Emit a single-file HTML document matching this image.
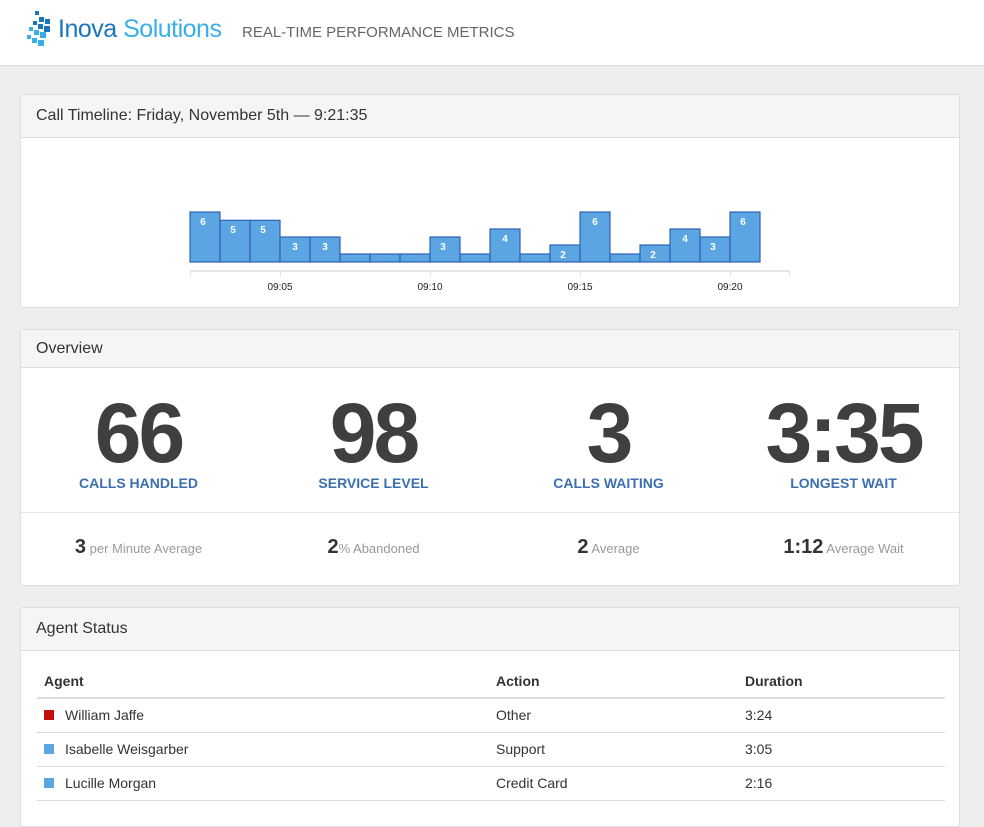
<!DOCTYPE html>
<html><head><meta charset="utf-8"><style>
*{box-sizing:border-box;margin:0;padding:0}
body{width:984px;height:806px;overflow:hidden;background:#eeeeee;font-family:"Liberation Sans",Arial,sans-serif;color:#333;position:relative}
.top{position:absolute;left:0;top:0;width:984px;height:66px;background:#fff;border-bottom:1px solid #ddd}
.brand{position:absolute;left:58px;top:15px;font-size:25px;letter-spacing:-0.5px;color:#1b75bc}
.brand span{color:#3aaee6}
.sub{position:absolute;left:242px;top:24px;font-size:15px;color:#666}
.panel{position:absolute;left:20px;width:940px;background:#fff;border:1px solid #ddd;border-radius:3px}
.ph{height:43px;background:#f5f5f5;border-bottom:1px solid #ddd;padding:12px 15px;font-size:16px;color:#333}
.big{position:absolute;width:235px;text-align:center;font-weight:bold;font-size:84px;color:#3f3f3f;letter-spacing:-3px;top:20px;line-height:90px}
.lab{position:absolute;width:235px;text-align:center;font-weight:bold;font-size:14px;color:#3c6fb1;top:107px}
.sm{position:absolute;width:235px;text-align:center;top:168px;font-size:13px;color:#999}
.sm b{font-size:20px;color:#333}
table{position:absolute;left:16px;top:65px;width:908px;border-collapse:collapse;font-size:14px}
th{text-align:left;font-weight:bold;height:25px;vertical-align:top;padding:0 7px;border-bottom:2px solid #ddd}
td{height:34px;padding:0 7px;border-bottom:1px solid #ddd}
.sq{display:inline-block;width:10px;height:10px;margin-right:11px;vertical-align:-0px}
</style></head><body>
<div class="top">
<svg style="position:absolute;left:27px;top:11px" width="24" height="36" viewBox="0 0 24 36">
<g fill="#1b75bc"><rect x="8" y="0" width="4" height="4"/><rect x="12" y="6" width="5" height="5"/><rect x="18" y="8" width="5" height="5"/><rect x="6" y="10" width="4" height="4"/><rect x="11" y="13" width="5" height="5"/><rect x="17" y="15" width="6" height="6"/></g>
<g fill="#3aaee6"><rect x="2" y="16" width="4" height="4"/><rect x="7" y="19" width="5" height="5"/><rect x="13" y="21" width="6" height="6"/><rect x="0" y="24" width="4" height="4"/><rect x="5" y="27" width="5" height="5"/><rect x="11" y="29" width="6" height="6"/></g>
</svg>
<div class="brand">Inova <span>Solutions</span></div>
<div class="sub">REAL-TIME PERFORMANCE METRICS</div>
</div>

<div class="panel" style="top:94px;height:214px">
<div class="ph">Call Timeline: Friday, November 5th — 9:21:35</div>
<svg style="position:absolute;left:-21px;top:-95px" width="984" height="310">
<g fill="#5ba5e2" stroke="#2f62b5" stroke-width="1.2">
<rect x="190" y="212" width="30" height="50"/><rect x="220" y="220.3" width="30" height="41.7"/><rect x="250" y="220.3" width="30" height="41.7"/><rect x="280" y="237" width="30" height="25"/><rect x="310" y="237" width="30" height="25"/><rect x="340" y="254" width="30" height="8"/><rect x="370" y="254" width="30" height="8"/><rect x="400" y="254" width="30" height="8"/><rect x="430" y="237" width="30" height="25"/><rect x="460" y="254" width="30" height="8"/><rect x="490" y="229" width="30" height="33"/><rect x="520" y="254" width="30" height="8"/><rect x="550" y="245" width="30" height="17"/><rect x="580" y="212" width="30" height="50"/><rect x="610" y="254" width="30" height="8"/><rect x="640" y="245" width="30" height="17"/><rect x="670" y="229" width="30" height="33"/><rect x="700" y="237" width="30" height="25"/><rect x="730" y="212" width="30" height="50"/>
</g>
<g fill="#fff" font-size="10" font-weight="bold" text-anchor="middle" font-family="Liberation Sans,sans-serif">
<text x="203" y="225">6</text><text x="233" y="233">5</text><text x="263" y="233">5</text><text x="295" y="250">3</text><text x="325" y="250">3</text><text x="443" y="250">3</text><text x="505" y="242">4</text><text x="563" y="258">2</text><text x="595" y="225">6</text><text x="653" y="258">2</text><text x="685" y="242">4</text><text x="713" y="250">3</text><text x="743" y="225">6</text>
</g>
<rect x="190" y="270" width="600" height="2" fill="#e6e6e6"/>
<g stroke="#e6e6e6"><line x1="190.5" y1="272" x2="190.5" y2="277"/><line x1="280.5" y1="272" x2="280.5" y2="277"/><line x1="430.5" y1="272" x2="430.5" y2="277"/><line x1="580.5" y1="272" x2="580.5" y2="277"/><line x1="730.5" y1="272" x2="730.5" y2="277"/><line x1="789.5" y1="272" x2="789.5" y2="277"/></g>
<g font-size="10" text-anchor="middle" fill="#222" font-family="Liberation Sans,sans-serif"><text x="280" y="290">09:05</text><text x="430" y="290">09:10</text><text x="580" y="290">09:15</text><text x="730" y="290">09:20</text></g>
</svg>
</div>

<div class="panel" style="top:329px;height:257px">
<div class="ph" style="height:38px;padding-top:10px">Overview</div>
<div style="position:absolute;left:0;top:38px;width:100%">
<div class="big" style="left:0">66</div><div class="big" style="left:235px">98</div><div class="big" style="left:470px">3</div><div class="big" style="left:705px">3:35</div>
<div class="lab" style="left:0">CALLS HANDLED</div><div class="lab" style="left:235px">SERVICE LEVEL</div><div class="lab" style="left:470px">CALLS WAITING</div><div class="lab" style="left:705px">LONGEST WAIT</div>
<div style="position:absolute;left:0;top:144px;width:938px;border-top:1px solid #e5e5e5"></div>
<div class="sm" style="left:0"><b>3</b> per Minute Average</div><div class="sm" style="left:235px"><b>2</b>% Abandoned</div><div class="sm" style="left:470px"><b>2</b> Average</div><div class="sm" style="left:705px"><b>1:12</b> Average Wait</div>
</div>
</div>

<div class="panel" style="top:607px;height:220px">
<div class="ph">Agent Status</div>
<table>
<tr><th style="width:452px">Agent</th><th style="width:249px">Action</th><th>Duration</th></tr>
<tr><td><span class="sq" style="background:#c40f0f"></span>William Jaffe</td><td>Other</td><td>3:24</td></tr>
<tr><td><span class="sq" style="background:#5ba5e2"></span>Isabelle Weisgarber</td><td>Support</td><td>3:05</td></tr>
<tr><td><span class="sq" style="background:#5ba5e2"></span>Lucille Morgan</td><td>Credit Card</td><td>2:16</td></tr>
</table>
</div>
</body></html>
